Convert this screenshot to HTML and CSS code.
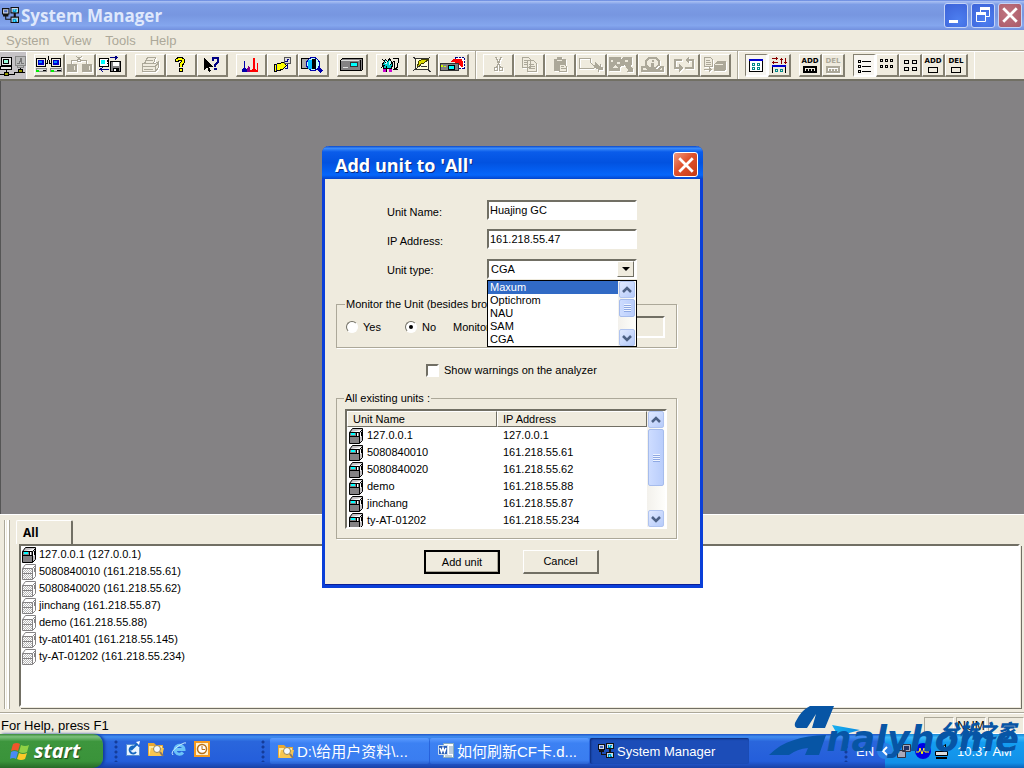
FILE: index.html
```html
<!DOCTYPE html>
<html lang="en">
<head>
<meta charset="utf-8">
<title>System Manager</title>
<link rel="stylesheet" href="styles.css">
</head>
<body>
<svg class="defs" aria-hidden="true">
  <defs>
    <linearGradient id="swish" x1="0" x2="1"><stop offset="0" stop-color="#19b0f0"/><stop offset="1" stop-color="#0a8be0"/></linearGradient>
    <pattern id="dots" width="2" height="2" patternUnits="userSpaceOnUse"><path fill="#fff" d="M0 0h2v2h-2z"/><path fill="#b8b8b8" d="M0 0h1v1h-1zM1 1h1v1h-1z"/></pattern>
  </defs>
  <symbol id="app" viewBox="0 0 16 16">
    <path fill="#111" d="M0 1h7v6h-7zM8 0h8v6h-8zM8 9h8v6h-8zM1 7h5v2h-5zM3 9h1v2h5v1h-6zM11 6h2v3h-2z"/>
    <path fill="#cfd6e6" d="M1 2h5v4h-5zM9 1h6v4h-6zM9 10h6v4h-6z"/>
    <path fill="#08c" d="M10 2h4v3h-4zM10 11h4v3h-4z"/><path fill="#5ff" d="M11 2h1v2h-1zM13 3h1v2h-1zM11 12h1v2h-1zM13 11h1v2h-1z"/><path fill="#46b" d="M2 3h3v2h-3z"/>
  </symbol>
  <symbol id="unit" viewBox="0 0 14 16">
    <path fill="#c6c3c6" stroke="#000" d="M.5 4.500l3-4h10v12l-3 3h-10zM.5 4.500h10l3-3M10.500 4.500v11"/>
    <path fill="#848284" d="M1 5h9v10h-9z"/><path fill="#000" d="M1 8h9v1h-9z"/>
    <path fill="#0ff" d="M2 5h4v2h-4z"/><path fill="#fff" d="M8 5h1v3h-1zM11 5h1v4h-1z"/><path fill="#000" d="M12 4h1v4h-1zM7 5h1v4h-1z"/>
  </symbol>
  <symbol id="unit-off" viewBox="0 0 14 16">
    <path fill="#fff" stroke="#848284" d="M.5 4.500l3-4h10v12l-3 3h-10zM.5 4.500h10l3-3M10.500 4.500v11"/>
    <path fill="url(#dots)" d="M1 5h9v10h-9z"/><path fill="#848284" d="M1 9h9v1h-9zM12 4h1v4h-1z"/>
  </symbol>
  <symbol id="chev-up" viewBox="0 0 10 8"><path fill="none" stroke="#4d6185" stroke-width="2.500" d="M1 6l4-4 4 4"/></symbol>
  <symbol id="chev-down" viewBox="0 0 10 8"><path fill="none" stroke="#4d6185" stroke-width="2.500" d="M1 2l4 4 4-4"/></symbol>
  <symbol id="x" viewBox="0 0 16 16"><path fill="none" stroke="#fff" stroke-width="2.500" d="M2 2l12 12M14 2l-12 12"/></symbol>
  <symbol id="folder" viewBox="0 0 16 16">
    <path fill="#e9a832" d="M0 2h6l2 2h7v11h-15z"/><path fill="#ffe9a0" d="M1 5h13v9h-13z"/><path fill="#f7c64f" d="M3 7h13l-2 8h-13z"/><circle cx="9" cy="8" r="3.500" fill="#f3faff" stroke="#9a8450"/><path stroke="#876" stroke-width="2" d="M12 11l3 4"/>
  </symbol>
</svg>

<div class="screen">
  <header class="titlebar">
    <svg class="app-icon"><use href="#app"/></svg>
    <h1>System Manager</h1>
    <div class="window-buttons">
      <button class="wb" aria-label="Minimize"><svg viewBox="0 0 22 22"><path fill="#fff" d="M4 16h9v3h-9z"/></svg></button>
      <button class="wb" aria-label="Restore"><svg viewBox="0 0 22 22"><path fill="none" stroke="#fff" d="M8.500 9v-4.500h9v8h-4M4.500 9.500h9v8h-9z"/><path fill="#fff" d="M8 3h10v3h-10zM4 8h10v3h-10z"/></svg></button>
      <button class="wb wb-close" aria-label="Close"><svg class="x"><use href="#x"/></svg></button>
    </div>
  </header>

  <nav class="menubar">
    <button disabled>System</button><button disabled>View</button><button disabled>Tools</button><button disabled>Help</button>
  </nav>

  <div class="toolbar" role="toolbar" aria-label="Main tools">
    <div class="status-box">
      <svg class="wide" viewBox="0 0 26 27"><path fill="#c6c3c6" d="M0 0h26v27h-26z"/>
        <path fill="#e8e8e8" stroke="#000" d="M1.500 5.500h10v8h-10zM.5 14.500h11v3h-11z"/><path fill="#9fd" stroke="#000" d="M3.500 7.500h5v4h-5z"/>
        <path fill="#bbb" stroke="#888" d="M15.500 4.500h10v9h-10zM17.500 13.500h6v2h-6z"/><path fill="none" stroke="#777" d="M17 11.500h2v-2h1v-3h1v5h3"/>
        <path fill="none" stroke="#000" d="M6.500 18v4M0 22.500h14v-2h11M20.500 16v4"/><path fill="#990" stroke="#000" d="M4.500 20.500h4v3h-4zM18.500 17.500h4v3h-4z"/></svg>
    </div>
    <div class="group">
      <button class="tb" aria-label="Connect"><svg viewBox="0 0 28 18">
        <path fill="#efebde" stroke="#000" d="M1.500 2.500h9v8h-9zM16.500 2.500h9v8h-9z"/><path fill="#00c" d="M3 4h6v5h-6zM18 4h6v5h-6z"/><path fill="#08f" d="M4 5h3v2h-3zM19 5h3v2h-3z"/>
        <path fill="#ddd" stroke="#888" d="M1.500 12.500h10v3h-10zM15.500 12.500h11v3h-11z"/><path fill="#0e0" d="M1 14h3v2h-3zM16 14h3v2h-3z"/><path fill="#000" d="M8 14h3v1h-3zM22 14h4v1h-4z"/>
        <path fill="none" stroke="#000" d="M11 7.500h1.500v-3l1-1v-4M16 7.500h-1.500v-3l-1-1"/></svg></button>
      <button class="tb" disabled aria-label="Disconnect"><svg viewBox="0 0 28 18"><path d="M1 8h10v8h-10zM16 8h10v8h-10z"/><path fill="none" stroke="#aca899" d="M5.500 8v-4h5l2 2M20.500 8v-4h-5l-2 2M10 0l6 5M16 0l-6 5"/><path fill="#efebde" d="M8 10h1v4h-1zM23 10h1v4h-1z"/></svg></button>
      <button class="tb" aria-label="Save from unit"><svg viewBox="0 0 28 18"><path fill="#fff" stroke="#000" d="M2.500 2.500h9v8h-9z"/><path fill="#0ff" d="M4 4h4v4h-4z"/><path fill="#000" d="M10 4h1v2h-1zM10 7h1v1h-1z"/><path fill="#848284" stroke="#000" d="M13.500 5.500h10v10h-10z"/><path fill="#fff" d="M16 6h6v4h-6z"/><path fill="#000" d="M16 12h6v3h-6z"/><path fill="#fff" d="M17 13h2v2h-2z"/><path fill="none" stroke="#000084" d="M13 1.500h7M18 0l2 1.500-2 2M12 13.500h-8M6 11l-3 2.500 3 2"/></svg></button>
    </div>
    <div class="group">
      <button class="tb" disabled aria-label="Print"><svg viewBox="0 0 28 18"><path fill="#efebde" stroke="#aca899" d="M8.500 7.500l3-6h8l-2 6M6.500 7.500h13l3-2v6l-3 4h-13z"/><path fill="none" stroke="#aca899" d="M7 10.500h12l3-3M8 13.500h9M11 4h6M19.500 11v4"/></svg></button>
      <button class="tb" aria-label="About"><svg viewBox="0 0 28 18"><path fill="none" stroke="#000" stroke-width="4" d="M10 6v-2l1-1h4l1 1v2l-2.500 3v2M11.500 14h4"/><path fill="none" stroke="#ff0" stroke-width="2" d="M10 5v-1l2-1h2l2 1v2l-2.500 3v2M12.500 14h2"/></svg></button>
      <button class="tb" aria-label="Context help"><svg viewBox="0 0 28 18"><path fill="#000" d="M6 1v13l3-3 2 5 2-1-2-4h4z"/><path fill="none" stroke="#000084" stroke-width="2" d="M15 5v-3h5v4l-3 3v2M16 13h3"/></svg></button>
    </div>
    <div class="group">
      <button class="tb" aria-label="Chromatogram"><svg viewBox="0 0 28 18"><path fill="#00a" d="M5 16v-3l2-1v-7h1v7l2 2v2z"/><path fill="#808" d="M10 16v-3l2-4 1 3v4z"/><path fill="red" d="M13 16v-2l3-1v-11h2v11l1 1h1v-7h1v9z"/></svg></button>
      <button class="tb" aria-label="Log"><svg viewBox="0 0 28 18"><path fill="#ff0" stroke="#000" d="M6.500 8.500l9-2 3 3-4 4-8 2z"/><path fill="#ddd" stroke="#555" d="M16.500 1.500h6v6h-6z"/><path fill="none" stroke="#000084" d="M17 5.500h2v-2h2M19.500 8v4h-3M8.500 8v7"/></svg></button>
      <button class="tb" aria-label="View unit"><svg viewBox="0 0 28 18"><path fill="#aaa" stroke="#000" d="M2.500 2.500h15v10h-15z"/><circle cx="14" cy="8" r="6.500" fill="#bff" stroke="#00a"/><path fill="#0bf" d="M9 4h4v9h-4z"/><path fill="#000" d="M13 3h4v10h-4z"/><path stroke="#00a" stroke-width="3" d="M19 12l4 4"/></svg></button>
    </div>
    <div class="group">
      <button class="tb" aria-label="Analyzer"><svg viewBox="0 0 28 18"><path fill="#848284" stroke="#000" d="M2.500 4.500l2-2h20v11l-1 1h-21z"/><path fill="#0ff" stroke="#333" d="M12.500 6.500h7v4h-7z"/><path fill="#ddd" d="M3 4h18v1h-18zM5 11h5v1h-5z"/><path fill="#000" d="M22 4h1v10h-1z"/></svg></button>
    </div>
    <div class="group">
      <button class="tb" aria-label="Users"><svg viewBox="0 0 28 18"><path fill="#0cc" stroke="#000" d="M5.500 8.500l3-5 2 2 2-3 3 6-1 4h-8z"/><path fill="#bff" d="M8 5h2v3h-2zM12 5h2v4h-2z"/><path fill="#c0c" d="M6 13h3v3h-3zM12 13h3v3h-3z"/><path fill="none" stroke="#000" d="M5 3l4 4M4 12l4-3M9.500 10v6M13 9l4-4M16 2h5v5q0 6-4 6M16 13h5M17.500 5v7"/></svg></button>
      <button class="tb" aria-label="Edit"><svg viewBox="0 0 28 18"><path fill="#ffd" stroke="#333" d="M7.500 2.500h13v11h-13z"/><path fill="#dd0" stroke="#440" d="M11 5l4-2h6l-5 4-3 1-4 4z"/><path fill="none" stroke="#333" d="M5 1l3 2M5 15l8-6M20 14l3 2M22 1l-2 2M13 10.500h6"/></svg></button>
      <button class="tb" aria-label="Transfer"><svg viewBox="0 0 28 18"><path fill="#fff" stroke="#000084" stroke-dasharray="2 1" d="M16.500 1.500h9v11h-9z"/><path fill="red" d="M12 5l2-2h9v2h1v6h-2l-2-3-5 3-3-3 5-2h-5z"/><path fill="#848284" stroke="#333" d="M1.500 7.500h18v7h-18z"/><path fill="#0ff" stroke="#000" d="M9.500 9.500h6v4h-6z"/><path fill="#cf0" d="M2 9h2v2h-2zM5 10h2v1h-2z"/></svg></button>
    </div>
    <div class="group edit-group">
      <button class="tb" disabled aria-label="Cut"><svg viewBox="0 0 28 18"><path fill="none" stroke="#aca899" stroke-width="1.500" d="M12 1l4 10M17 1l-4 10"/><circle cx="12" cy="13" r="2" fill="none" stroke="#aca899"/><circle cx="17" cy="13" r="2" fill="none" stroke="#aca899"/></svg></button>
      <button class="tb" disabled aria-label="Copy"><svg viewBox="0 0 28 18"><path fill="#efebde" stroke="#aca899" d="M7.500 1.500h6l2 2v8h-8zM12.500 4.500h6l3 3v8h-9z"/><path stroke="#aca899" d="M9 4.500h3M9 6.500h3M9 8.500h3M14 8.500h5M14 10.500h6M14 12.500h6"/></svg></button>
      <button class="tb" disabled aria-label="Paste"><svg viewBox="0 0 28 18"><path d="M8 3h3v-2h5v2h4v12h-12z"/><path fill="#efebde" stroke="#aca899" d="M13.500 8.500h5l2 2v5h-7z"/><path stroke="#aca899" d="M15 10.500h3M15 12.500h5"/><path stroke="#efebde" d="M11 4.500h5"/></svg></button>
      <button class="tb" disabled aria-label="Rename"><svg viewBox="0 0 28 18"><path fill="none" stroke="#aca899" d="M2.500 12.500v-10h11v4l4 4M2 12.500h15"/><path d="M18 6l5 4v-2h1v3h2v3h-4v2h-1v-3l-4-1z"/></svg></button>
      <button class="tb" disabled aria-label="Find"><svg viewBox="0 0 28 18"><path d="M1 1h12v2l3-2h8v8l-2 1 3 3v3h-6l1-2-3-5-5 2v4h-11z"/><path fill="#efebde" d="M3 4h2v2h-2zM9 6h3v2h-3zM4 12l3-3 3 3zM17 4h3v2h-3z"/></svg></button>
      <button class="tb" disabled aria-label="Information"><svg viewBox="0 0 28 18"><path fill="#efebde" stroke="#aca899" stroke-width="1.500" d="M7 5l3-3h7l3 3v4l-4 3h-5l-4-3zM3 11h4l3 3h9l3-3h2v4h-21z"/><path d="M13 4h2v2h-2zM12 7h3v4h-3z"/></svg></button>
      <button class="tb" disabled aria-label="Swap"><svg viewBox="0 0 28 18"><path fill="none" stroke="#aca899" stroke-width="2" d="M12 4h-7v8h5M15 12h8v-8h-5"/><path d="M9 8l4 4-4 4zM19 0v8l-4-4z"/></svg></button>
      <button class="tb" disabled aria-label="Export"><svg viewBox="0 0 28 18"><path fill="#efebde" stroke="#aca899" d="M3.500 1.500h6l2 2v7h-8z"/><path stroke="#aca899" d="M5 4.500h4M5 6.500h5M5 8.500h5M3 13.500h7M8 11l2 2.500-2 2"/><path d="M13 8l3-3h9v8l-2 2h-10z"/><path fill="#efebde" d="M14 8h8v1h-8z"/></svg></button>
    </div>
    <div class="group view-group">
      <button class="tb sm on" aria-label="Unit view"><svg viewBox="0 0 20 18"><path fill="#fff" stroke="#000" d="M3.500 3.500h13v12h-13z"/><path fill="#00c" d="M3 3h14v2h-14z"/><path fill="none" stroke="#088" d="M6.500 7.500h2v2h-2zM11.500 7.500h2v2h-2zM6.500 11.500h2v2h-2zM11.500 11.500h2v2h-2z"/></svg></button>
      <button class="tb sm" aria-label="Rearrange"><svg viewBox="0 0 20 18"><path fill="none" stroke="#800" d="M3 2.500h6M7.500 1v3M9 6.500h-6M4.500 5v3M12.500 2v6M11 3.500h3M16.500 2v6M15 6.500h3"/><path fill="none" stroke="#000" d="M3.500 17v-7h13v7"/><path fill="#00c" d="M3 9h14v2h-14z"/><path fill="none" stroke="#088" d="M6.500 13.500h2v2h-2zM11.500 13.500h2v2h-2z"/></svg></button>
    </div>
    <div class="group">
      <button class="tb sm"><span>ADD</span><svg viewBox="0 0 14 7"><path fill="none" stroke="#000" stroke-width="2" d="M1 1h12v5h-12z"/><path fill="#000" d="M3 3h2v2h-2zM6 3h2v2h-2zM9 3h2v2h-2z"/></svg></button>
      <button class="tb sm" disabled><span>DEL</span><svg viewBox="0 0 14 7"><path fill="none" stroke="#aca899" stroke-width="2" d="M1 1h12v5h-12z"/><path d="M3 3h2v2h-2zM6 3h2v2h-2zM9 3h2v2h-2z"/></svg></button>
    </div>
    <div class="group last-group">
      <button class="tb sm on" aria-label="List view"><svg viewBox="0 0 20 18"><path fill="none" stroke="#000" d="M4.500 4.500h2v2h-2zM4.500 9.500h2v2h-2zM4.500 14.500h2v2h-2zM8 5.500h9M8 10.500h9M8 15.500h9"/></svg></button>
      <button class="tb sm" aria-label="Small icons"><svg viewBox="0 0 20 18"><path fill="none" stroke="#000" d="M3.500 3.500h2v2h-2zM8.500 3.500h2v2h-2zM13.500 3.500h2v2h-2zM3.500 9.500h2v2h-2zM8.500 9.500h2v2h-2zM13.500 9.500h2v2h-2z"/></svg></button>
      <button class="tb sm" aria-label="Large icons"><svg viewBox="0 0 20 18"><path fill="none" stroke="#000" d="M4.500 4.500h4v3h-4zM12.500 4.500h4v3h-4zM4.500 11.500h4v3h-4zM12.500 11.500h4v3h-4z"/></svg></button>
      <button class="tb sm"><span>ADD</span><svg viewBox="0 0 14 7"><path fill="none" stroke="#000" d="M2.500 1.500h9v5h-9z"/></svg></button>
      <button class="tb sm"><span>DEL</span><svg viewBox="0 0 14 7"><path fill="none" stroke="#000" d="M2.500 1.500h9v5h-9z"/></svg></button>
    </div>
  </div>

  <main class="workspace"></main>

  <section class="dock">
    <div class="gripper"></div>
    <div class="sheet">
      <div class="tabs"><button class="tab">All</button></div>
      <ul class="unit-list">
        <li><svg><use href="#unit"/></svg>127.0.0.1 (127.0.0.1)</li>
        <li><svg><use href="#unit-off"/></svg>5080840010 (161.218.55.61)</li>
        <li><svg><use href="#unit-off"/></svg>5080840020 (161.218.55.62)</li>
        <li><svg><use href="#unit-off"/></svg>jinchang (161.218.55.87)</li>
        <li><svg><use href="#unit-off"/></svg>demo (161.218.55.88)</li>
        <li><svg><use href="#unit-off"/></svg>ty-at01401 (161.218.55.145)</li>
        <li><svg><use href="#unit-off"/></svg>ty-AT-01202 (161.218.55.234)</li>
      </ul>
    </div>
  </section>

  <div class="statusbar"><span class="hint">For Help, press F1</span><span class="cell"></span><span class="cell">NUM</span><span class="cell"></span></div>

  <footer class="taskbar">
    <button class="start"><svg viewBox="0 0 20 18"><path fill="#f0562b" d="M3 2q4-2 7 0l-2 7q-3-2-7 0z"/><path fill="#8fd145" d="M11 3q4 2 8 0l-2 7q-4 2-8 0z"/><path fill="#4a8af4" d="M1 10q3-2 7 0l-2 7q-3-2-6 0z"/><path fill="#fbc928" d="M9 11q4 2 8 0l-2 6q-4 2-8 0z"/></svg>start</button>
    <div class="quick">
      <i class="grip"></i>
      <svg viewBox="0 0 16 16"><path fill="#e9f4ff" stroke="#5a90d0" d="M1.500 3.500h10l3 3v8h-13z"/><path fill="none" stroke="#1466c0" stroke-width="2" d="M10 6a3.500 3.500 0 1 0 1 5M6 9l7-7"/><path fill="#fff" d="M11 1l4-1-1 4z"/></svg>
      <svg><use href="#folder"/></svg>
      <svg viewBox="0 0 16 16"><path fill="none" stroke="#6cc3f8" stroke-width="3" d="M4 8.500h9a4.500 4.500 0 1 0-1 3"/><path fill="none" stroke="#cdeeff" d="M2 14q-3-3 4-8t9-4"/></svg>
      <svg viewBox="0 0 16 16"><path fill="#f49a20" d="M0 0h16v16h-16z"/><path fill="#fff2d0" d="M2 2h12v12h-12z"/><circle cx="8" cy="8" r="4.500" fill="#fff" stroke="#b87018" stroke-width="1.500"/><path fill="none" stroke="#b87018" d="M8 5v3.500h3"/></svg>
    </div>
    <div class="tasks">
      <i class="grip"></i>
      <button class="task"><svg><use href="#folder"/></svg>D:\给用户资料\...</button>
      <button class="task"><svg viewBox="0 0 16 16"><path fill="#fff" stroke="#8ab" d="M5.500.5h10v14h-10z"/><path stroke="#79b" d="M11 4h4M11 6h4M11 8h4M11 10h4M7 13h7"/><path fill="#2b5fb8" stroke="#cde" d="M.5 2.500h9v9h-9z"/><path fill="none" stroke="#fff" stroke-width="1.500" d="M2 5l1.500 4L5 5l1.500 4L8 5"/></svg>如何刷新CF卡.d...</button>
      <button class="task current"><svg><use href="#app"/></svg>System Manager</button>
    </div>
    <div class="lang"><i class="grip"></i>EN</div>
    <div class="tray">
      <svg viewBox="0 0 16 16"><circle cx="8" cy="8" r="8" fill="#2a80e6"/><path fill="none" stroke="#fff" stroke-width="2" d="M10 4l-4 4 4 4"/></svg>
      <svg viewBox="0 0 16 16"><path fill="#aab" stroke="#334" d="M1.500 7.500h8v7h-8zM6.500 1.500h8v7h-8z"/><path fill="#236" d="M8 3h5v4h-5z"/></svg>
      <svg viewBox="0 0 16 16"><circle cx="8" cy="8" r="8" fill="#0000e6"/><path fill="none" stroke="#ff0" d="M1 9h3l1-4 2 6 2-6 1 4h4"/></svg>
      <svg viewBox="0 0 16 16"><path fill="#ddd" stroke="#000" d="M6.500 5.500l5-4v6zM1.500 8.500h12v4h-12z"/><path fill="#000" d="M2 14h11v2h-11z"/></svg>
      <time>10:37 AM</time>
    </div>
  </footer>

  <div class="watermark">
    <svg viewBox="0 0 94 52"><path fill="#0755a5" d="M26 17c3-6 7-13 15-17h24l-9 22h-13l4-14-9 14h-10q-3-1-2-5zM0 49c14-14 32-19 57-20l-7 20h-14l3-7q-11 1-19 7z"/><path fill="url(#swish)" d="M63 19l28 5-29 8 5-6z"/></svg>
    <b class="cn">分析之家</b>
    <b class="en">nalyhome</b>
  </div>

  <section class="dialog" role="dialog" aria-labelledby="dlg-title">
    <header class="dialog-title">
      <h2 id="dlg-title">Add unit to 'All'</h2>
      <button class="dialog-close" aria-label="Close"><svg class="x"><use href="#x"/></svg></button>
    </header>
    <form class="dialog-body">
      <div class="fields">
        <label for="name">Unit Name:</label><input id="name" type="text" value="Huajing GC">
        <label for="ip">IP Address:</label><input id="ip" type="text" value="161.218.55.47">
        <label for="type">Unit type:</label>
        <div class="combo">
          <select id="type"><option>Maxum</option><option>Optichrom</option><option>NAU</option><option>SAM</option><option selected>CGA</option></select>
          <span class="combo-arrow"></span>
          <div class="popup">
            <ul role="listbox" aria-label="Unit type">
              <li role="option" aria-selected="true">Maxum</li><li role="option">Optichrom</li><li role="option">NAU</li><li role="option">SAM</li><li role="option">CGA</li>
            </ul>
            <div class="scroll"><span class="sbtn"><svg><use href="#chev-up"/></svg></span><span class="thumb"></span><span class="sbtn end"><svg><use href="#chev-down"/></svg></span></div>
          </div>
        </div>
      </div>

      <fieldset class="monitor">
        <legend>Monitor the Unit (besides broa</legend>
        <div class="monitor-row">
          <label><input type="radio" name="mon">Yes</label>
          <label><input type="radio" name="mon" checked>No</label>
          <label class="period" for="period">Monitor</label>
          <input id="period" type="text" disabled>
        </div>
      </fieldset>

      <label class="warn"><input type="checkbox">Show warnings on the analyzer</label>

      <fieldset class="existing">
        <legend>All existing units :</legend>
        <div class="listview">
          <table>
            <thead><tr><th>Unit Name</th><th>IP Address</th></tr></thead>
            <tbody>
              <tr><td><svg><use href="#unit"/></svg>127.0.0.1</td><td>127.0.0.1</td></tr>
              <tr><td><svg><use href="#unit"/></svg>5080840010</td><td>161.218.55.61</td></tr>
              <tr><td><svg><use href="#unit"/></svg>5080840020</td><td>161.218.55.62</td></tr>
              <tr><td><svg><use href="#unit"/></svg>demo</td><td>161.218.55.88</td></tr>
              <tr><td><svg><use href="#unit"/></svg>jinchang</td><td>161.218.55.87</td></tr>
              <tr><td><svg><use href="#unit"/></svg>ty-AT-01202</td><td>161.218.55.234</td></tr>
            </tbody>
          </table>
          <div class="scroll"><span class="sbtn"><svg><use href="#chev-up"/></svg></span><span class="thumb tall"></span><span class="sbtn end"><svg><use href="#chev-down"/></svg></span></div>
        </div>
      </fieldset>

      <div class="actions"><button type="button" class="btn default">Add unit</button><button type="button" class="btn">Cancel</button></div>
    </form>
  </section>
</div>
</body>
</html>
```

FILE: styles.css
```css
:root {
  --face: #efebde;
  --shade: #aca899;
  --dark: #716f64;
  --ui: "Liberation Sans", Arial, sans-serif;
}
* { box-sizing: border-box; }
body { margin: 0; font: 11px/13px var(--ui); color: #000; background: var(--face); }
button, input, select { font: inherit; color: inherit; margin: 0; padding: 0; border: 0; border-radius: 0; background: none; }
ul { list-style: none; margin: 0; padding: 0; }
h1, h2 { margin: 0; font: bold 18px/24px "Open Sans", "Noto Sans", sans-serif; color: #fff; }
.defs { position: absolute; width: 0; height: 0; }

.screen { position: relative; min-height: 100vh; display: flex; flex-direction: column; }

.titlebar { height: 30px; display: flex; align-items: center; gap: 2px; padding: 0 2px; background: linear-gradient(#5a7edc 0, #a6bdf2 5%, #7d9de6 15%, #7796e0 50%, #84a6ee 85%, #7290de 100%); }
.titlebar h1 { flex: 1; padding-top: 2px; color: #dfe8fc; font-size: 17px; }
.app-icon { width: 17px; height: 17px; }
.window-buttons { display: flex; gap: 3px; }
.wb { width: 24px; height: 25px; border: 1px solid #c5d4f7; border-radius: 3px; background: radial-gradient(circle at 60% 70%, #4d7ff0, #3c62d8); display: grid; place-items: center; }
.wb svg { width: 22px; height: 22px; }
.wb-close { background: radial-gradient(circle at 40% 40%, #c07480, #aa5a68); }
.wb .x, .dialog-close .x { width: 18px; height: 18px; }

.menubar { height: 20px; display: flex; gap: 14px; padding: 0 6px; align-items: center; font-size: 13px; color: var(--shade); }

.toolbar { height: 31px; display: flex; align-items: center; gap: 8px; border-top: 1px solid var(--shade); border-bottom: 2px solid var(--dark); box-shadow: inset 0 1px #fff; }
.status-box { width: 27px; align-self: stretch; display: flex; align-items: center; border-right: 1px solid #fff; margin-right: -1px; }
.wide { width: 26px; height: 27px; shape-rendering: crispEdges; }
.group { display: flex; align-items: center; }
.edit-group, .view-group { align-self: stretch; border-left: 1px solid #fff; padding-left: 6px; box-shadow: -1px 0 var(--shade); }
.last-group { align-self: stretch; border-right: 1px solid #fff; padding-right: 6px; }
.edit-group { margin-left: -1px; }
.view-group { margin-left: -1px; }
.tb { width: 31px; height: 23px; border: solid; border-width: 1px 2px 2px 1px; border-color: #fff #848071 #848071 #fff; display: flex; flex-direction: column; align-items: center; justify-content: center; background: var(--face); }
.tb svg { width: 28px; height: 18px; shape-rendering: crispEdges; flex: none; }
.tb:disabled { color: var(--shade); }
.tb:disabled svg { fill: var(--shade); filter: drop-shadow(1px 1px 0 #fff); }
.tb.sm { width: 23px; }
.tb.sm svg { width: 20px; height: 18px; }
.tb.sm span { font: bold 7px/9px "DejaVu Sans", sans-serif; }
.tb.sm span + svg { width: 14px; height: 7px; }
.tb.on { border-color: #848071 #fff #fff #848071; background: #f8f6f1; }

.workspace { flex: 1; background: #848284; border-left: 1px solid #555; }

.dock { height: 198px; display: flex; gap: 6px; padding: 5px 2px 3px 4px; border-top: 1px solid #fff; }
.gripper { width: 6px; border: solid var(--shade); border-width: 0 1px; box-shadow: inset 1px 0 #fff, inset -2px 0 #fff; }
.sheet { flex: 1; display: flex; flex-direction: column; }
.tabs { height: 23px; }
.tab { width: 57px; height: 24px; padding: 0 6px; text-align: left; font: bold 12px/18px "Noto Sans", sans-serif; display: block; border: solid; border-width: 1px 2px 0 1px; border-color: #fff var(--dark) #fff #fff; border-radius: 2px 2px 0 0; }
.unit-list { flex: 1; margin: 1px 2px 2px 3px; padding: 0 1px; background: #fff; border: 2px solid; border-color: var(--dark) #fff #fff var(--dark); box-shadow: 1px 1px 0 var(--face), 2px 2px 0 var(--dark); }
.unit-list li { height: 17px; display: flex; align-items: center; gap: 3px; }
.unit-list svg, .existing td svg { width: 14px; height: 16px; flex: none; }

.statusbar { height: 22px; display: flex; gap: 2px; padding: 4px 0 0 1px; border-top: 1px solid var(--shade); box-shadow: inset 0 1px #fff; font-size: 13px; line-height: 17px; }
.hint { flex: 1; }
.cell { width: 30px; border: 1px solid; border-color: var(--shade) #fff #fff var(--shade); text-align: center; font-size: 12px; }
.cell:last-child { width: 36px; }

.taskbar { height: 34px; display: flex; color: #fff; font-size: 13px; background: linear-gradient(#1f56c8 0, #3f8df0 8%, #2a66dc 22%, #245edb 80%, #1941a5 100%); }
.start { width: 103px; display: flex; align-items: center; gap: 4px; padding-left: 10px; font: italic bold 20px/28px "Open Sans", sans-serif; border-radius: 0 10px 10px 0; background: linear-gradient(#3a8a3a 0, #7cc07c 8%, #3d963d 22%, #3a933a 80%, #276a27 100%); box-shadow: 2px 0 3px #123c9c; text-shadow: 1px 1px 1px #1c4a1c; }
.start svg { width: 20px; height: 18px; }
.grip { width: 5px; height: 22px; background: radial-gradient(circle at 2px 2px, #143c9a 1px, transparent 2px) 0 0 / 5px 5px; }
.quick { width: 158px; display: flex; align-items: center; gap: 7px; padding: 0 0 0 11px; }
.quick .grip { margin-right: -1px; }
.quick svg, .task svg { width: 16px; height: 16px; flex: none; }
.quick svg { overflow: visible; margin-bottom: 4px; }
.tasks { flex: 1; display: flex; align-items: center; gap: 1px; min-width: 0; }
.tasks .grip { margin-right: 3px; }
.task { width: 159px; height: 26px; display: flex; align-items: center; gap: 3px; padding: 0 8px; border-radius: 2px; background: linear-gradient(#5a9bff, #3c81f3 20%, #3a7df0 85%, #2a62d0); font-family: "Liberation Sans", "Noto Sans CJK SC", sans-serif; font-size: 13px; white-space: nowrap; }
.task:nth-of-type(-n+2) { font-size: 15px; }
.task.current { background: #1c4db8; box-shadow: inset 1px 1px 2px #0b2a78; }
.lang { width: 41px; display: flex; align-items: center; gap: 7px; }
.tray { width: 139px; display: flex; align-items: center; gap: 3px; white-space: nowrap; background: linear-gradient(#1486d8 0, #3fb8f8 10%, #149df0 25%, #1290e8 85%, #0c62b8 100%); }
.tray svg { width: 16px; height: 16px; flex: none; }
.tray svg:first-child { margin-left: -8px; }
.tray time { margin-left: 4px; }

.watermark { position: absolute; right: 0; bottom: 0; width: 255px; height: 64px; color: #0755a5; pointer-events: none; }
.watermark svg { position: absolute; left: 0; top: 2px; width: 94px; height: 52px; }
.watermark b { position: absolute; white-space: nowrap; }
.cn { right: 8px; top: 14px; font: italic 900 19px/24px "Noto Sans CJK SC", sans-serif; }
.en { right: 5px; top: 14px; font: italic bold 35px/42px "DejaVu Sans", sans-serif; }

.dialog { position: absolute; left: 50%; top: 146px; width: 381px; transform: translateX(-190px); background: var(--face); border: solid #0a3fd8; border-width: 0 3px 3px; border-radius: 7px 7px 0 0; box-shadow: inset 0 -1px #0a1e96; }
.dialog-title { height: 33px; margin: 0 -3px; padding: 4px 5px 0 13px; display: flex; align-items: center; border-radius: 7px 7px 0 0; background: linear-gradient(#0a48c8 0, #3b8cfa 7%, #0a5cea 18%, #0252e0 50%, #0566fb 88%, #0344cc 100%); }
.dialog-title h2 { flex: 1; text-shadow: 1px 1px #0a2a80; }
.dialog-close { width: 25px; height: 25px; border: 1px solid #fff; border-radius: 3px; background: linear-gradient(135deg, #f09a80, #e0512c 45%, #c43a14); display: grid; place-items: center; }
.dialog-body { padding: 21px 23px 11px 11px; display: flex; flex-direction: column; }

.fields { display: grid; grid-template-columns: 100px 150px; row-gap: 9px; padding-left: 51px; }
.fields label { padding-top: 6px; }
input[type="text"], .fields select { width: 100%; height: 20px; padding: 0 1px 1px; background: #fff; border: 2px solid; border-color: var(--dark) #fff #fff var(--dark); }
.combo { position: relative; margin-top: 1px; }
.fields select { appearance: none; padding: 0 2px; }
.combo-arrow { position: absolute; right: 3px; top: 2px; width: 17px; height: 16px; background: var(--face); border: 1px solid; border-color: #fff var(--dark) var(--dark) #fff; display: grid; place-items: center; pointer-events: none; }
.combo-arrow::before { content: ""; border: 4px solid transparent; border-top-color: #000; border-bottom: 0; }
.popup { position: absolute; z-index: 2; left: 0; right: 0; top: 21px; display: flex; background: #fff; border: 1px solid #000; }
.popup ul { flex: 1; }
.popup li { padding: 0 2px; }
.popup li[aria-selected] { background: #316ac5; color: #fff; }

.scroll { width: 18px; display: flex; flex-direction: column; gap: 1px; background: linear-gradient(90deg, #f3f1ec, #fefefb); }
.sbtn { height: 17px; margin: 0 1px; border: 1px solid #b0c4f0; border-radius: 2px; background: linear-gradient(135deg, #e0e9ff, #b6cbfa); display: grid; place-items: center; flex: none; }
.sbtn svg { width: 10px; height: 8px; }
.sbtn.end { margin-top: auto; }
.thumb { height: 18px; margin: 0 1px; border: 1px solid #a6bcec; border-radius: 2px; background: linear-gradient(90deg, #cddcff, #b9cdfb); display: grid; place-items: center; }
.thumb::before { content: ""; width: 7px; height: 8px; background: repeating-linear-gradient(#eef4ff 0 1px, #8fa9e4 1px 2px); }
.thumb.tall { height: 57px; }

fieldset { margin: 0; min-width: 0; border: 1px solid var(--shade); box-shadow: 1px 1px 0 #fff; }
legend { padding: 0 1px; margin-left: -1px; }
.monitor { margin-top: 19px; padding: 5px 11px 9px 9px; }
.monitor-row { display: flex; align-items: center; }
.monitor-row label { display: flex; align-items: center; gap: 5px; width: 59px; }
.monitor-row label.period { width: 48px; }
.monitor-row label:nth-child(2) { width: 48px; }
.monitor-row input[type="text"] { flex: 1; background: var(--face); margin-left: 36px; height: 22px; }
input[type="radio"] { appearance: none; width: 12px; height: 12px; border-radius: 50%; background: #fff; border: 1px solid; border-color: var(--dark) #fff #fff var(--dark); display: grid; place-items: center; }
input[type="radio"]:checked::before { content: ""; width: 4px; height: 4px; border-radius: 50%; background: #000; }
.warn { display: flex; align-items: center; gap: 5px; margin: 16px 0 15px 90px; }
input[type="checkbox"] { appearance: none; width: 13px; height: 13px; background: #fff; border: 2px solid; border-color: var(--dark) #fff #fff var(--dark); }
.existing { padding: 4px 9px 9px 8px; }
.listview { height: 120px; display: flex; overflow: hidden; background: #fff; border: 2px solid; border-color: var(--dark) #fff #fff var(--dark); }
.listview table { flex: 1; align-self: flex-start; border-collapse: separate; border-spacing: 0; table-layout: fixed; }
.listview th { width: 50%; height: 16px; padding: 0 5px; font-weight: normal; text-align: left; background: var(--face); border: 1px solid; border-color: #fff var(--dark) var(--dark) #fff; }
.listview td { height: 17px; padding: 0 6px; }
.listview td:first-child { padding: 0 2px; display: flex; align-items: center; gap: 4px; }

.actions { display: flex; gap: 23px; margin: 11px 0 0 88px; }
.btn { width: 76px; height: 24px; background: var(--face); border: solid; border-width: 1px 2px 2px 1px; border-color: #fff var(--dark) var(--dark) #fff; }
.btn.default { border: 1px solid #000; box-shadow: inset 1px 1px #fff, inset -2px -2px var(--shade); outline: 1px solid #000; outline-offset: -2px; }
```
